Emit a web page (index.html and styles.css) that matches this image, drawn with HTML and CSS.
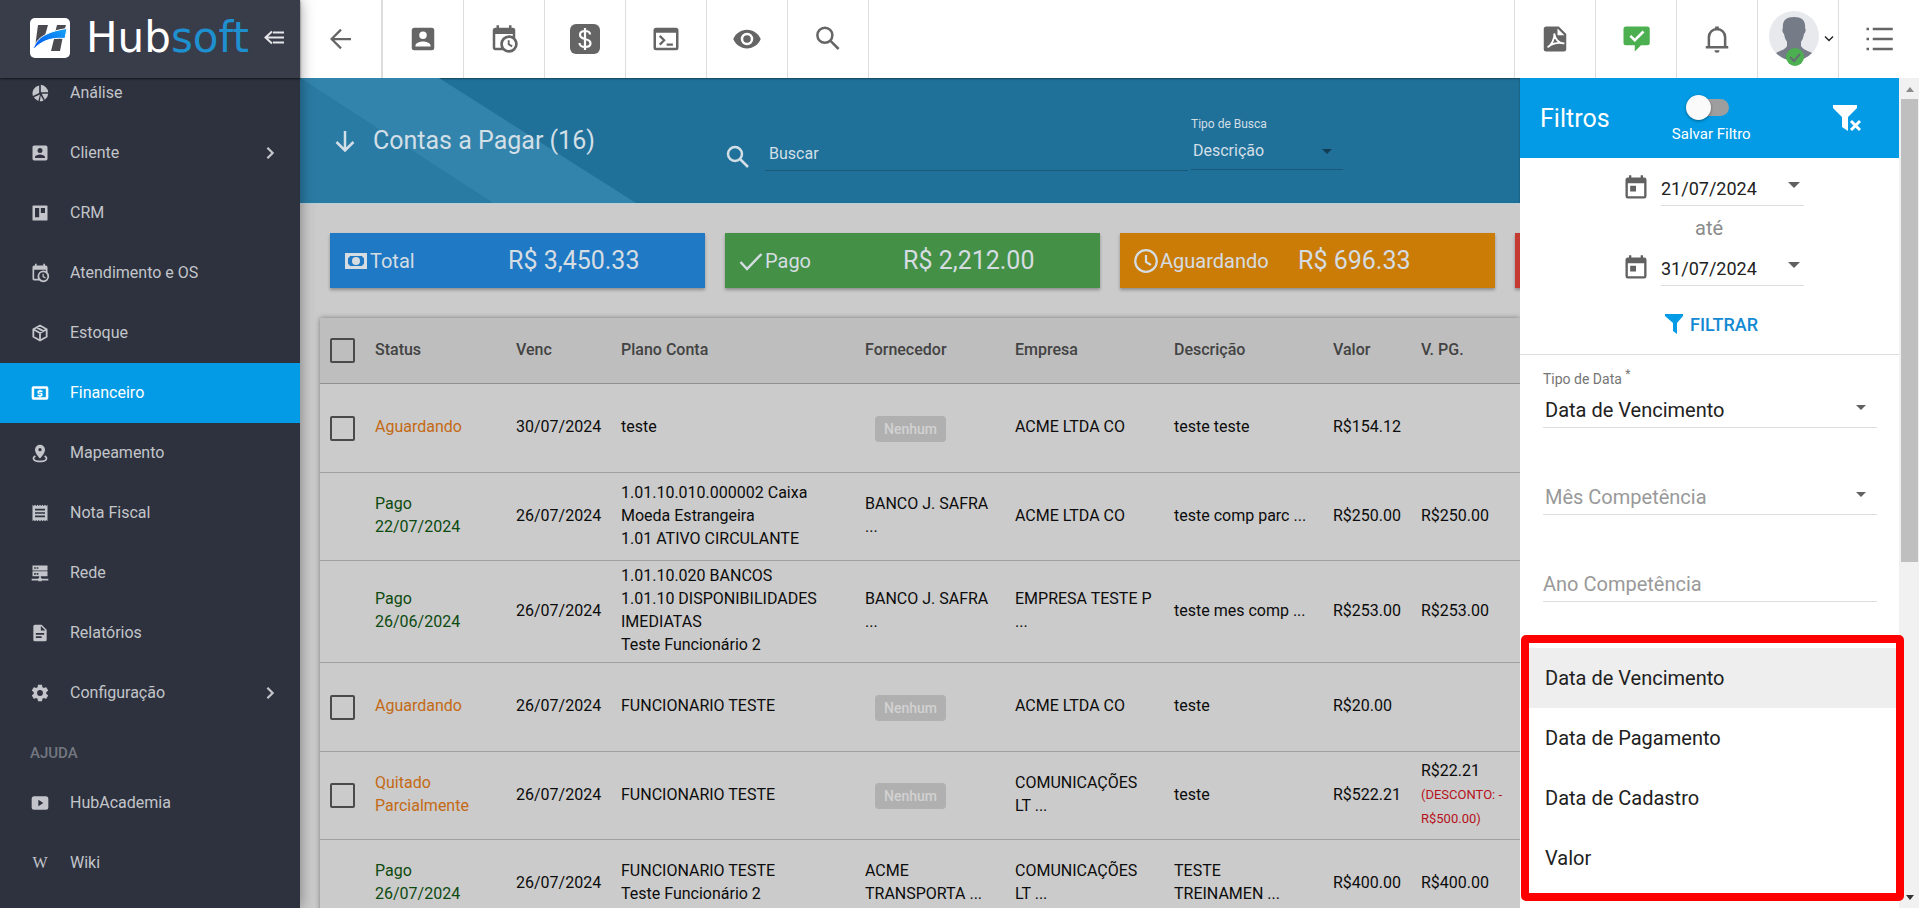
FILE: index.html
```html
<!DOCTYPE html>
<html lang="pt-br">
<head>
    <meta charset="UTF-8">
    <meta name="viewport" content="width=device-width, initial-scale=1.0">
    <title>Hubsoft - Contas a Pagar</title>
    <link rel="stylesheet" href="styles.css">
</head>
<body>
    <aside class="sidebar">
        <div class="brand">
            <svg class="brand-logo" viewBox="0 0 40 40">
                <defs>
                    <linearGradient id="wave" x1="0" y1="1" x2="1" y2="0">
                        <stop offset="0" stop-color="#0050f0"/>
                        <stop offset="1" stop-color="#16a4f5"/>
                    </linearGradient>
                </defs>
                <rect width="40" height="40" rx="5" fill="#fff"/>
                <path d="M8 7h10l-4 14-9 8z" fill="#4b4b4f"/>
                <path d="M27 7h9l-2 6-9 2zM24 21l9-3-3 15h-9z" fill="#4b4b4f"/>
                <path d="M3 32C6 21 14 14 37 10.500L35 20.500C20 19 10 24 3 32z" fill="url(#wave)" stroke="#fff" stroke-width="1"/>
            </svg>
            <span class="brand-name">Hub<span>soft</span></span>
            <button class="fold" aria-label="Recolher menu">
                <svg viewBox="0 0 20 16"><path d="M8 1.500L1.500 7.500L8 13.500M2 7.500H20M9 2.500H20M9 12.500H20" fill="none" stroke="currentColor" stroke-width="2"/></svg>
            </button>
        </div>
        <nav class="menu">
            <ul>
                <li><a href="#"><svg viewBox="0 0 24 24"><path d="M13 2.100V11h8.900A10 10 0 0 0 13 2.100zM11 3.100A9.500 9.500 0 0 0 3.500 15.500L11 12zM21.900 13H14l3.800 7A9.500 9.500 0 0 0 21.900 13zM12 13.800L4.600 17.200A9.500 9.500 0 0 0 10 21.500zM12.900 15L11.800 22a9.500 9.500 0 0 0 4.500-1z"/></svg>Análise</a></li>
                <li><a href="#"><svg viewBox="0 0 24 24"><path d="M6,17C6,15 10,13.9 12,13.9C14,13.9 18,15 18,17V18H6M15,9A3,3 0 0,1 12,12A3,3 0 0,1 9,9A3,3 0 0,1 12,6A3,3 0 0,1 15,9M3,5V19A2,2 0 0,0 5,21H19A2,2 0 0,0 21,19V5A2,2 0 0,0 19,3H5C3.890,3 3,3.900 3,5Z"/></svg>Cliente<svg class="chevron" viewBox="0 0 24 24"><path d="M8.500 5l7 7-7 7" fill="none" stroke="currentColor" stroke-width="3"/></svg></a></li>
                <li><a href="#"><svg viewBox="0 0 24 24"><path fill-rule="evenodd" d="M4 3h16a1 1 0 0 1 1 1v16a1 1 0 0 1-1 1H4a1 1 0 0 1-1-1V4a1 1 0 0 1 1-1zM6 6v11h5V6zM13 6v6h5V6z"/></svg>CRM</a></li>
                <li><a href="#"><svg viewBox="0 0 24 24"><path d="M15,13H16.500V15.820L18.940,17.230L18.190,18.530L15,16.690V13M19,8H5V19H9.670C9.240,18.090 9,17.070 9,16A7,7 0 0,1 16,9C17.070,9 18.090,9.240 19,9.670V8M5,21C3.890,21 3,20.100 3,19V5C3,3.890 3.890,3 5,3H6V1H8V3H16V1H18V3H19A2,2 0 0,1 21,5V11.100C22.240,12.360 23,14.090 23,16A7,7 0 0,1 16,23C14.090,23 12.360,22.240 11.100,21H5M16,11.150A4.850,4.850 0 0,0 11.150,16C11.150,18.680 13.320,20.850 16,20.850A4.850,4.850 0 0,0 20.850,16C20.850,13.320 18.680,11.150 16,11.150Z"/></svg>Atendimento e OS</a></li>
                <li><a href="#"><svg viewBox="0 0 24 24"><path d="M12 3l8 4.500v9L12 21l-8-4.500v-9zM4 7.500l8 4.500 8-4.500M12 12v9M8 5.200l8 4.600" fill="none" stroke="currentColor" stroke-width="2.200" stroke-linejoin="round"/></svg>Estoque</a></li>
                <li class="active"><a href="#"><svg viewBox="0 0 24 24"><path fill-rule="evenodd" d="M4 4h16a2 2 0 0 1 2 2v12a2 2 0 0 1-2 2H4a2 2 0 0 1-2-2V6a2 2 0 0 1 2-2zM5 7v10h14V7z"/><path d="M11 8h2v1h2v2h-4v1h3a1 1 0 0 1 1 1v2a1 1 0 0 1-1 1h-1v1h-2v-1H9v-2h4v-1h-3a1 1 0 0 1-1-1v-2a1 1 0 0 1 1-1h1z"/></svg>Financeiro</a></li>
                <li><a href="#"><svg viewBox="0 0 24 24"><path fill-rule="evenodd" d="M12 2a6 6 0 0 1 6 6c0 4.500-6 10.500-6 10.500S6 12.500 6 8a6 6 0 0 1 6-6zM12 6a2 2 0 1 0 0 4 2 2 0 0 0 0-4z"/><path d="M6.500 15.500C2 18 4 22 12 22s10-4 5.500-6.500" fill="none" stroke="currentColor" stroke-width="2"/></svg>Mapeamento</a></li>
                <li><a href="#"><svg viewBox="0 0 24 24"><path fill-rule="evenodd" d="M3 22l1.500-1.500L6 22l1.500-1.500L9 22l1.500-1.500L12 22l1.500-1.500L15 22l1.500-1.500L18 22l1.500-1.500L21 22V2l-1.500 1.500L18 2l-1.500 1.500L15 2l-1.500 1.500L12 2l-1.500 1.500L9 2 7.500 3.500 6 2 4.500 3.500 3 2zM18 9H6V7h12zM18 13H6v-2h12zM18 17H6v-2h12z"/></svg>Nota Fiscal</a></li>
                <li><a href="#"><svg viewBox="0 0 24 24"><path fill-rule="evenodd" d="M3 3h18v6H3zM3 10h18v6h-8v2h1v1h8v2h-8v1h-4v-1H2v-2h8v-1h1v-2H3zM5 5v2h2V5zM8 5v2h2V5zM5 12v2h2v-2zM8 12v2h2v-2z"/></svg>Rede</a></li>
                <li><a href="#"><svg viewBox="0 0 24 24"><path fill-rule="evenodd" d="M6 2h8l6 6v12a2 2 0 0 1-2 2H6a2 2 0 0 1-2-2V4a2 2 0 0 1 2-2zM13 3.500V9h5.500zM7 12v2h10v-2zM7 16v2h7v-2z"/></svg>Relatórios</a></li>
                <li><a href="#"><svg viewBox="0 0 24 24"><path d="M12,15.500A3.500,3.500 0 0,1 8.500,12A3.500,3.500 0 0,1 12,8.500A3.500,3.500 0 0,1 15.500,12A3.500,3.500 0 0,1 12,15.500M19.430,12.970C19.470,12.650 19.500,12.330 19.500,12C19.500,11.670 19.470,11.340 19.430,11L21.540,9.370C21.730,9.220 21.780,8.950 21.660,8.730L19.660,5.270C19.540,5.050 19.270,4.960 19.050,5.050L16.560,6.050C16.040,5.660 15.500,5.320 14.870,5.070L14.500,2.420C14.460,2.180 14.250,2 14,2H10C9.750,2 9.540,2.180 9.500,2.420L9.130,5.070C8.500,5.320 7.960,5.660 7.440,6.050L4.950,5.050C4.730,4.960 4.460,5.050 4.340,5.270L2.340,8.730C2.210,8.950 2.270,9.220 2.460,9.370L4.570,11C4.530,11.340 4.500,11.670 4.500,12C4.500,12.330 4.530,12.650 4.570,12.970L2.460,14.630C2.270,14.780 2.210,15.050 2.340,15.270L4.340,18.730C4.460,18.950 4.730,19.030 4.950,18.950L7.440,17.940C7.960,18.340 8.500,18.680 9.130,18.930L9.500,21.580C9.540,21.820 9.750,22 10,22H14C14.250,22 14.460,21.820 14.500,21.580L14.870,18.930C15.500,18.670 16.040,18.340 16.560,17.940L19.050,18.950C19.270,19.030 19.540,18.950 19.660,18.730L21.660,15.270C21.780,15.050 21.730,14.780 21.540,14.630L19.430,12.970Z"/></svg>Configuração<svg class="chevron" viewBox="0 0 24 24"><path d="M8.500 5l7 7-7 7" fill="none" stroke="currentColor" stroke-width="3"/></svg></a></li>
                <li class="menu-title">AJUDA</li>
                <li><a href="#"><svg viewBox="0 0 24 24"><path fill-rule="evenodd" d="M5 4h14a3 3 0 0 1 3 3v10a3 3 0 0 1-3 3H5a3 3 0 0 1-3-3V7a3 3 0 0 1 3-3zM10 8v8l6-4z"/></svg>HubAcademia</a></li>
                <li><a href="#"><span class="wiki-icon" aria-hidden="true">W</span>Wiki</a></li>
            </ul>
        </nav>
    </aside>

    <div class="page">
        <header class="toolbar">
            <button class="back" aria-label="Voltar"><svg viewBox="0 0 24 24"><path d="M12 4.500L4.500 12l7.500 7.500M4.500 12H20" fill="none" stroke="currentColor" stroke-width="1.800"/></svg></button>
            <button aria-label="Clientes"><svg viewBox="0 0 24 24"><path d="M6,17C6,15 10,13.9 12,13.9C14,13.9 18,15 18,17V18H6M15,9A3,3 0 0,1 12,12A3,3 0 0,1 9,9A3,3 0 0,1 12,6A3,3 0 0,1 15,9M3,5V19A2,2 0 0,0 5,21H19A2,2 0 0,0 21,19V5A2,2 0 0,0 19,3H5C3.890,3 3,3.900 3,5Z"/></svg></button>
            <button aria-label="Agenda"><svg viewBox="0 0 24 24"><path d="M15,13H16.500V15.820L18.940,17.230L18.190,18.530L15,16.690V13M19,8H5V19H9.670C9.240,18.090 9,17.070 9,16A7,7 0 0,1 16,9C17.070,9 18.090,9.240 19,9.670V8M5,21C3.890,21 3,20.100 3,19V5C3,3.890 3.890,3 5,3H6V1H8V3H16V1H18V3H19A2,2 0 0,1 21,5V11.100C22.240,12.360 23,14.090 23,16A7,7 0 0,1 16,23C14.090,23 12.360,22.240 11.100,21H5M16,11.150A4.850,4.850 0 0,0 11.150,16C11.150,18.680 13.320,20.850 16,20.850A4.850,4.850 0 0,0 20.850,16C20.850,13.320 18.680,11.150 16,11.150Z"/></svg></button>
            <button aria-label="Financeiro"><svg viewBox="0 0 30 30"><rect width="30" height="30" rx="6"/><path d="M15 4v22M20 10.500c0-2-2-3.500-5-3.500s-5 1.500-5 3.800c0 2.500 2 3.500 5 4.200s5.500 1.600 5.500 4.200c0 2.300-2.300 3.800-5.500 3.800s-5.500-1.600-5.500-4" fill="none" stroke="#fff" stroke-width="2.200"/></svg></button>
            <button aria-label="Console"><svg viewBox="0 0 24 24"><path fill-rule="evenodd" d="M4 3h16a2 2 0 0 1 2 2v14a2 2 0 0 1-2 2H4a2 2 0 0 1-2-2V5a2 2 0 0 1 2-2zM4 7v12h16V7z"/><path d="M7 9.500l3.500 3.500L7 16.500M12.500 16.500h5" fill="none" stroke="currentColor" stroke-width="1.800"/></svg></button>
            <button aria-label="Visualizar"><svg viewBox="0 0 24 24"><path d="M12,9A3,3 0 0,0 9,12A3,3 0 0,0 12,15A3,3 0 0,0 15,12A3,3 0 0,0 12,9M12,17A5,5 0 0,1 7,12A5,5 0 0,1 12,7A5,5 0 0,1 17,12A5,5 0 0,1 12,17M12,4.500C7,4.500 2.730,7.610 1,12C2.730,16.390 7,19.500 12,19.500C17,19.500 21.270,16.390 23,12C21.270,7.610 17,4.500 12,4.500Z"/></svg></button>
            <button aria-label="Pesquisar"><svg viewBox="0 0 24 24"><path d="M9.500 3a6 6 0 1 0 0 12 6 6 0 0 0 0-12M14 13.500l6.500 6.500" fill="none" stroke="currentColor" stroke-width="2"/></svg></button>
            <div class="toolbar-space"></div>
            <button aria-label="PDF"><svg viewBox="-1 0 24 24"><path fill-rule="evenodd" d="M4 2h10l6 6v12a2 2 0 0 1-2 2H4a2 2 0 0 1-2-2V4a2 2 0 0 1 2-2zM13 3.500V9h5.500z"/><path d="M5 18.500c3-1 6-7 5.500-11M10.500 8c.5 4 3.500 7.500 8 7.500M6 18c2-2.500 8-3.500 11.500-2.500" fill="none" stroke="#fff" stroke-width="1.500"/></svg></button>
            <button class="chat" aria-label="Atendimento"><svg viewBox="-1 0 24 24"><path d="M3 2h17a2 2 0 0 1 2 2v11a2 2 0 0 1-2 2h-5l-5 5v-5H3a2 2 0 0 1-2-2V4a2 2 0 0 1 2-2z"/><path d="M6.500 9.500l3.500 3.500L17 6" fill="none" stroke="#fff" stroke-width="2"/></svg></button>
            <button aria-label="Notificações"><svg viewBox="0 0 24 24"><path d="M3 18.500h18M5.500 18v-7.500a6.500 6.500 0 0 1 13 0V18" fill="none" stroke="currentColor" stroke-width="2"/><path d="M10.500 2h3v3h-3zM10 21h4a2 2 0 0 1-4 0z"/></svg></button>
            <button class="user" aria-label="Usuário">
                <svg class="avatar" viewBox="0 0 50 56">
                    <circle cx="25" cy="25" r="25" fill="#e8e9ed"/>
                    <path d="M14 17c-1-7 3-11 11-11s12 4 11 11c1 1 1 4-1 6-1 5-2 6-3 8v4c2 4 8 5 11 7a25 25 0 0 1-36 0c3-2 9-3 11-7v-4c-1-2-2-3-3-8-2-2-2-5-1-6z" fill="#757b87"/>
                    <circle cx="26" cy="46" r="9" fill="#4caf50"/>
                    <path d="M21 46l4 4 6-7" fill="none" stroke="#656d72" stroke-width="2"/>
                </svg>
                <svg class="caret" viewBox="0 0 10 8"><path d="M1 1.500l4 4 4-4" fill="none" stroke="#222" stroke-width="1.400"/></svg>
            </button>
            <button class="list" aria-label="Lista"><svg viewBox="0 0 24 24"><path d="M2 3h2v2H2zM2 11h2v2H2zM2 19h2v2H2zM7 3h16v2H7zM7 11h16v2H7zM7 19h16v2H7z"/></svg></button>
        </header>

        <div class="workspace">
            <main class="content">
                <section class="hero">
                    <svg class="hero-art" width="400" height="125" viewBox="0 0 400 125">
                        <path d="M0 0L193 125H0z" fill="#2a7ba4"/>
                        <path d="M0 0H139L336 125H193z" fill="#3284ac"/>
                    </svg>
                    <svg class="hero-arrow" viewBox="0 0 20 22"><path d="M10 0v19M1.500 11L10 19.500l8.500-8.500" fill="none" stroke="currentColor" stroke-width="2.500"/></svg>
                    <h1>Contas a Pagar (16)</h1>
                    <label class="hero-search">
                        <svg viewBox="0 0 24 24"><path d="M9 2a7 7 0 1 0 0 14A7 7 0 0 0 9 2M14 14l8 8" fill="none" stroke="currentColor" stroke-width="2.500"/></svg>
                        <input type="text" placeholder="Buscar">
                    </label>
                    <div class="hero-type">
                        <label for="tipoBusca">Tipo de Busca</label>
                        <div class="select-box">
                            <select id="tipoBusca"><option>Descrição</option></select>
                        </div>
                    </div>
                </section>

                <section class="totals">
                    <div class="total blue">
                        <div class="total-label"><svg viewBox="0 0 24 24"><path fill-rule="evenodd" d="M1 4h22v16H1zM6 7a3 3 0 0 1-2 2v6a3 3 0 0 1 2 2h12a3 3 0 0 1 2-2V9a3 3 0 0 1-2-2z"/><circle cx="12" cy="12" r="4"/></svg>Total</div>
                        <div class="total-value">R$ 3,450.33</div>
                    </div>
                    <div class="total green">
                        <div class="total-label"><svg viewBox="0 0 24 24"><path d="M1.500 13l6.500 7L22.500 5" fill="none" stroke="currentColor" stroke-width="2.500"/></svg>Pago</div>
                        <div class="total-value">R$ 2,212.00</div>
                    </div>
                    <div class="total orange">
                        <div class="total-label"><svg viewBox="0 0 24 24"><path d="M12 1.200a10.800 10.800 0 1 0 0 21.600 10.800 10.800 0 0 0 0-21.600M12 6v7l5 3" fill="none" stroke="currentColor" stroke-width="2.200"/></svg>Aguardando</div>
                        <div class="total-value">R$ 696.33</div>
                    </div>
                    <div class="total red"></div>
                </section>

                <table class="bills">
                    <colgroup>
                        <col class="c-check"><col class="c-status"><col class="c-venc"><col class="c-plano"><col class="c-forn"><col class="c-emp"><col class="c-desc"><col class="c-valor"><col>
                    </colgroup>
                    <thead>
                        <tr>
                            <th><input type="checkbox" aria-label="Selecionar todos"></th>
                            <th>Status</th>
                            <th>Venc</th>
                            <th>Plano Conta</th>
                            <th>Fornecedor</th>
                            <th>Empresa</th>
                            <th>Descrição</th>
                            <th>Valor</th>
                            <th>V. PG.</th>
                        </tr>
                    </thead>
                    <tbody>
                        <tr>
                            <td><input type="checkbox" aria-label="Selecionar"></td>
                            <td class="waiting">Aguardando</td>
                            <td>30/07/2024</td>
                            <td>teste</td>
                            <td><span class="none">Nenhum</span></td>
                            <td>ACME LTDA CO</td>
                            <td>teste teste</td>
                            <td>R$154.12</td>
                            <td></td>
                        </tr>
                        <tr>
                            <td></td>
                            <td class="paid">Pago<br>22/07/2024</td>
                            <td>26/07/2024</td>
                            <td>1.01.10.010.000002 Caixa<br>Moeda Estrangeira<br>1.01 ATIVO CIRCULANTE</td>
                            <td>BANCO J. SAFRA<br>...</td>
                            <td>ACME LTDA CO</td>
                            <td>teste comp parc ...</td>
                            <td>R$250.00</td>
                            <td>R$250.00</td>
                        </tr>
                        <tr>
                            <td></td>
                            <td class="paid">Pago<br>26/06/2024</td>
                            <td>26/07/2024</td>
                            <td>1.01.10.020 BANCOS<br>1.01.10 DISPONIBILIDADES<br>IMEDIATAS<br>Teste Funcionário 2</td>
                            <td>BANCO J. SAFRA<br>...</td>
                            <td>EMPRESA TESTE P<br>...</td>
                            <td>teste mes comp ...</td>
                            <td>R$253.00</td>
                            <td>R$253.00</td>
                        </tr>
                        <tr>
                            <td><input type="checkbox" aria-label="Selecionar"></td>
                            <td class="waiting">Aguardando</td>
                            <td>26/07/2024</td>
                            <td>FUNCIONARIO TESTE</td>
                            <td><span class="none">Nenhum</span></td>
                            <td>ACME LTDA CO</td>
                            <td>teste</td>
                            <td>R$20.00</td>
                            <td></td>
                        </tr>
                        <tr>
                            <td><input type="checkbox" aria-label="Selecionar"></td>
                            <td class="waiting">Quitado<br>Parcialmente</td>
                            <td>26/07/2024</td>
                            <td>FUNCIONARIO TESTE</td>
                            <td><span class="none">Nenhum</span></td>
                            <td>COMUNICAÇÕES<br>LT ...</td>
                            <td>teste</td>
                            <td>R$522.21</td>
                            <td>R$22.21<br><span class="discount">(DESCONTO: -<br>R$500.00)</span></td>
                        </tr>
                        <tr>
                            <td></td>
                            <td class="paid">Pago<br>26/07/2024</td>
                            <td>26/07/2024</td>
                            <td>FUNCIONARIO TESTE<br>Teste Funcionário 2</td>
                            <td>ACME<br>TRANSPORTA ...</td>
                            <td>COMUNICAÇÕES<br>LT ...</td>
                            <td>TESTE<br>TREINAMEN ...</td>
                            <td>R$400.00</td>
                            <td>R$400.00</td>
                        </tr>
                    </tbody>
                </table>
            </main>

            <aside class="filters">
                <div class="filters-head">
                    <h2>Filtros</h2>
                    <label class="save">
                        <input type="checkbox" class="switch">
                        Salvar Filtro
                    </label>
                    <button class="clear" aria-label="Limpar filtros"><svg viewBox="0 0 28 28"><path d="M0 1h24v3l-9 9v14l-6-4V13L0 4z"/><path d="M18 17l9 9M27 17l-9 9" stroke="currentColor" stroke-width="3"/></svg></button>
                </div>

                <div class="dates">
                    <label class="date">
                        <svg viewBox="0 0 24 24"><path d="M7,10H12V15H7M19,19H5V8H19M19,3H18V1H16V3H8V1H6V3H5C3.890,3 3,3.900 3,5V19A2,2 0 0,0 5,21H19A2,2 0 0,0 21,19V5A2,2 0 0,0 19,3Z"/></svg>
                        <span class="date-field"><input type="text" value="21/07/2024" aria-label="Data inicial"></span>
                    </label>
                    <div class="until">até</div>
                    <label class="date">
                        <svg viewBox="0 0 24 24"><path d="M7,10H12V15H7M19,19H5V8H19M19,3H18V1H16V3H8V1H6V3H5C3.890,3 3,3.900 3,5V19A2,2 0 0,0 5,21H19A2,2 0 0,0 21,19V5A2,2 0 0,0 19,3Z"/></svg>
                        <span class="date-field"><input type="text" value="31/07/2024" aria-label="Data final"></span>
                    </label>
                    <button class="apply"><svg viewBox="0 0 18 20"><path d="M0 0h18v2l-6 7v11l-4-3V9L0 2z"/></svg>FILTRAR</button>
                </div>

                <div class="fields">
                    <div class="field">
                        <label for="tipoData">Tipo de Data <sup>*</sup></label>
                        <div class="select-box">
                            <select id="tipoData"><option>Data de Vencimento</option></select>
                        </div>
                    </div>
                    <div class="field">
                        <div class="select-box">
                            <select class="empty" aria-label="Mês Competência"><option>Mês Competência</option></select>
                        </div>
                    </div>
                    <div class="field">
                        <input type="text" placeholder="Ano Competência" aria-label="Ano Competência">
                    </div>
                </div>

                <div class="options">
                    <button class="selected">Data de Vencimento</button>
                    <button>Data de Pagamento</button>
                    <button>Data de Cadastro</button>
                    <button>Valor</button>
                </div>
            </aside>

            <div class="scrollbar">
                <span class="scroll-up"></span>
                <span class="scroll-thumb"></span>
                <span class="scroll-down"></span>
            </div>
        </div>
    </div>
</body>
</html>
```
FILE: styles.css
```css
* {
    box-sizing: border-box;
}
body {
    margin: 0;
    height: 100vh;
    display: flex;
    overflow: hidden;
    font-family: Roboto, "Liberation Sans", sans-serif;
    font-size: 16px;
    background-color: #cbcbcb;
}
button, input, select {
    font: inherit;
    color: inherit;
    background: none;
    border: none;
    border-radius: 0;
    padding: 0;
    margin: 0;
    outline: none;
}
button {
    cursor: pointer;
}
svg {
    fill: currentColor;
    flex: none;
}

/* menu lateral */
.sidebar {
    width: 300px;
    flex: none;
    background-color: #2d323e;
    color: #c3c5ca;
    display: flex;
    flex-direction: column;
    box-shadow: 0 0 14px rgba(0,0,0,0.4);
    z-index: 2;
}
.brand {
    height: 78px;
    flex: none;
    display: flex;
    align-items: center;
    padding: 0 16px 2px 30px;
    background-color: #393c49;
    box-shadow: 0 1px 2px rgba(0,0,0,0.6);
    z-index: 1;
}
.brand-logo {
    width: 40px;
    height: 40px;
}
.brand-name {
    margin-left: 16px;
    font-family: "DejaVu Sans", sans-serif;
    font-size: 42px;
    line-height: 40px;
    color: #fff;
}
.brand-name span {
    color: #1e90d0;
}
.fold {
    margin-left: auto;
    color: #e4e5e8;
}
.fold svg {
    display: block;
    width: 20px;
    height: 16px;
}
.menu {
    flex: 1;
    overflow: hidden;
}
.menu ul {
    list-style: none;
    margin: -15px 0 0;
    padding: 0;
}
.menu a {
    height: 60px;
    display: flex;
    align-items: center;
    padding: 0 20px 2px 30px;
    color: inherit;
    text-decoration: none;
}
.menu svg, .wiki-icon {
    width: 20px;
    height: 20px;
    margin: 2px 20px 0 0;
}
.menu .chevron {
    width: 18px;
    height: 18px;
    margin: 2px 1px 0 auto;
}
.menu .active {
    background-color: #039be5;
    color: #fff;
}
.menu-title {
    height: 50px;
    padding-left: 30px;
    line-height: 60px;
    font-size: 15px;
    font-weight: 500;
    color: #747780;
}
.wiki-icon {
    font-family: "Liberation Serif", serif;
    line-height: 20px;
    text-align: center;
}

.page {
    flex: 1;
    min-width: 0;
    display: flex;
    flex-direction: column;
}

/* barra superior */
.toolbar {
    height: 78px;
    flex: none;
    display: flex;
    background-color: #fff;
    color: #656565;
}
.toolbar button {
    width: 81px;
    display: flex;
    align-items: center;
    justify-content: center;
    border-right: 1px solid #ddd;
}
.toolbar svg {
    width: 30px;
    height: 30px;
}
.toolbar .back {
    width: 83px;
    border-right-width: 2px;
}
.toolbar-space {
    flex: 1;
    border-right: 1px solid #ddd;
}
.toolbar .chat {
    color: #4caf50;
}
.toolbar .list {
    width: 80px;
    border: none;
}
.toolbar .user {
    padding-left: 6px;
}
.toolbar .avatar {
    width: 50px;
    height: 56px;
}
.toolbar .caret {
    width: 10px;
    height: 8px;
    margin-left: 5px;
}

.workspace {
    flex: 1;
    min-height: 0;
    display: flex;
}
.content {
    flex: 1;
    min-width: 0;
    overflow: hidden;
}

/* cabeçalho azul */
.hero {
    position: relative;
    height: 125px;
    display: flex;
    padding-left: 35px;
    background-color: #20719a;
    color: #d2dfe6;
    box-shadow: inset 0 1px 2px rgba(0,0,0,0.4), 0 1px 0 #b9cfda;
}
.hero > * {
    position: relative;
}
.hero .hero-art {
    position: absolute;
    left: 0;
    top: 0;
}
.hero-arrow {
    width: 20px;
    height: 22px;
    margin: 53px 18px 0 0;
}
.hero h1 {
    width: 353px;
    margin: 48px 0 0;
    font-size: 25px;
    line-height: 30px;
    font-weight: 400;
}
.hero-search {
    flex: 0 1 462px;
    height: 93px;
    display: flex;
    align-items: flex-end;
}
.hero-search svg {
    width: 24px;
    height: 24px;
    margin: 0 15px 2px 0;
}
.hero-search input {
    flex: 1;
    min-width: 0;
    height: 34px;
    padding-left: 4px;
    border-bottom: 1px solid #1b587a;
}
.hero-search input::placeholder {
    color: inherit;
}
.hero-type {
    width: 152px;
    margin: 38px 0 0 3px;
}
.hero-type label {
    display: block;
    font-size: 12px;
    line-height: 16px;
}
.hero-type select {
    height: 38px;
    padding: 0 0 0 2px;
    border-bottom: 1px solid #1b587a;
}
.select-box {
    position: relative;
}
.select-box select {
    display: block;
    width: 100%;
    appearance: none;
}
.select-box::after, .date-field::after {
    content: "";
    position: absolute;
    right: 11px;
    top: 17px;
    border: 5px solid transparent;
    border-top-color: #616161;
    border-bottom: none;
}
.hero-type .select-box::after {
    border-top-color: #123d55;
}

/* totais */
.totals {
    display: flex;
    gap: 20px;
    padding: 30px;
}
.total {
    width: 375px;
    height: 55px;
    flex: none;
    display: flex;
    align-items: center;
    padding: 0 14px;
    color: #d5dde3;
    box-shadow: 0 2px 3px rgba(0,0,0,0.3);
}
.total-label {
    width: 164px;
    display: flex;
    align-items: center;
    font-size: 20px;
}
.total-label svg {
    width: 24px;
    height: 24px;
    margin-right: 2px;
}
.total-value {
    font-size: 25px;
}
.blue {
    background-color: #1f79c4;
}
.green {
    background-color: #449046;
}
.orange {
    background-color: #cb7c06;
}
.red {
    background-color: #c33b31;
}

/* tabela */
.bills {
    width: calc(100% - 20px);
    margin-left: 20px;
    table-layout: fixed;
    border-spacing: 0;
    color: #0c0c0c;
    box-shadow: 0 0 5px rgba(0,0,0,0.4);
}
.c-check {
    width: 55px;
}
.c-status {
    width: 141px;
}
.c-venc {
    width: 105px;
}
.c-plano {
    width: 244px;
}
.c-forn {
    width: 150px;
}
.c-emp, .c-desc {
    width: 159px;
}
.c-valor {
    width: 88px;
}
.bills th {
    height: 66px;
    padding: 0 0 2px;
    text-align: left;
    font-weight: 500;
    color: #434343;
    background-color: #bebebe;
    border-bottom: 1px solid #8f8f8f;
}
.bills td {
    height: 88px;
    padding: 3px 0 6px;
    line-height: 23px;
    white-space: nowrap;
    border-bottom: 1px solid #a0a0a0;
}
.bills tr:nth-child(3n+1) td {
    height: 89px;
}
.bills td:first-child, .bills th:first-child {
    padding: 0 0 0 10px;
}
.bills input {
    appearance: none;
    display: block;
    width: 25px;
    height: 25px;
    border: 2px solid #4a4a4a;
    border-radius: 2px;
}
.waiting {
    color: #c46a14;
}
.paid {
    color: #0d4a0f;
}
.none {
    display: inline-block;
    width: 71px;
    height: 26px;
    margin: 4px 0 0 10px;
    border-radius: 4px;
    background-color: #b0b0b0;
    color: #d2d2d2;
    font-size: 14px;
    font-weight: 500;
    line-height: 26px;
    text-align: center;
}
.discount {
    font-size: 13px;
    color: #b5121b;
}

/* filtros */
.filters {
    position: relative;
    width: 379px;
    flex: none;
    background-color: #fff;
}
.filters-head {
    height: 80px;
    display: flex;
    align-items: center;
    justify-content: space-between;
    padding: 0 38px 0 20px;
    background-color: #039be5;
    color: #fff;
}
.filters h2 {
    margin: 0;
    font-size: 25px;
    font-weight: 400;
}
.save {
    display: flex;
    flex-direction: column;
    align-items: center;
    gap: 9px;
    margin: 5px 20px 0 0;
    font-size: 15px;
    line-height: 18px;
}
.switch {
    appearance: none;
    position: relative;
    width: 40px;
    height: 17px;
    margin-right: 5px;
    border-radius: 9px;
    background-color: #9e9e9e;
}
.switch::before {
    content: "";
    position: absolute;
    left: -3px;
    top: -4px;
    width: 25px;
    height: 25px;
    border-radius: 50%;
    background-color: #fafafa;
    box-shadow: 0 1px 3px rgba(0,0,0,0.4);
}
.clear svg {
    display: block;
    width: 28px;
    height: 28px;
}
.dates {
    height: 197px;
    padding: 12px 95px 0 102px;
    border-bottom: 1px solid #ddd;
    color: #212121;
}
.date {
    display: flex;
    align-items: center;
    height: 36px;
}
.date svg {
    width: 28px;
    height: 28px;
    margin-right: 11px;
    color: #616161;
}
.date-field {
    position: relative;
    width: 143px;
}
.date-field::after {
    right: 4px;
    top: 12px;
    border-width: 6px;
}
.date input {
    width: 100%;
    height: 36px;
    padding-top: 2px;
    font-size: 18px;
    border-bottom: 1px solid #ddd;
}
.until {
    line-height: 44px;
    padding-left: 73px;
    font-size: 20px;
    color: #8b8b8b;
}
.apply {
    display: flex;
    align-items: center;
    gap: 7px;
    height: 36px;
    margin: 20px 0 0 43px;
    font-size: 18px;
    font-weight: 500;
    color: #1489d3;
}
.apply svg {
    width: 18px;
    height: 20px;
    color: #039be5;
}
.fields {
    padding: 13px 22px 0 23px;
    color: #212121;
}
.field {
    margin-bottom: 47px;
}
.field label {
    display: block;
    height: 20px;
    font-size: 14px;
    line-height: 20px;
    color: #757575;
}
.field sup {
    font-size: 12px;
    line-height: 12px;
}
.field select, .field input {
    display: block;
    width: 100%;
    height: 40px;
    padding-top: 4px;
    font-size: 20px;
    border-bottom: 1px solid #ddd;
}
.field select {
    padding-left: 2px;
}
.field .empty, .field input::placeholder {
    color: #999;
}

/* lista aberta do campo tipo de data */
.options {
    position: absolute;
    left: 1px;
    top: 557px;
    width: 383px;
    padding: 5px 0;
    border: 8px solid #fe0000;
    border-radius: 5px;
    background-color: #fff;
    color: #212121;
    z-index: 1;
}
.options button {
    display: block;
    width: 100%;
    height: 60px;
    padding-left: 16px;
    font-size: 20px;
    text-align: left;
}
.options .selected {
    background-color: #eee;
}

.scrollbar {
    width: 20px;
    flex: none;
    display: flex;
    flex-direction: column;
    padding: 9px 1px 8px 2px;
    background-color: #f1f1f1;
}
.scroll-up, .scroll-down {
    align-self: center;
    border: 4px solid transparent;
}
.scroll-up {
    border-top: none;
    border-bottom: 5px solid #8b8b8b;
}
.scroll-down {
    margin-top: auto;
    border-bottom: none;
    border-top: 5px solid #333;
}
.scroll-thumb {
    height: 57%;
    margin-top: 7px;
    background-color: #bfbfbf;
}
```
